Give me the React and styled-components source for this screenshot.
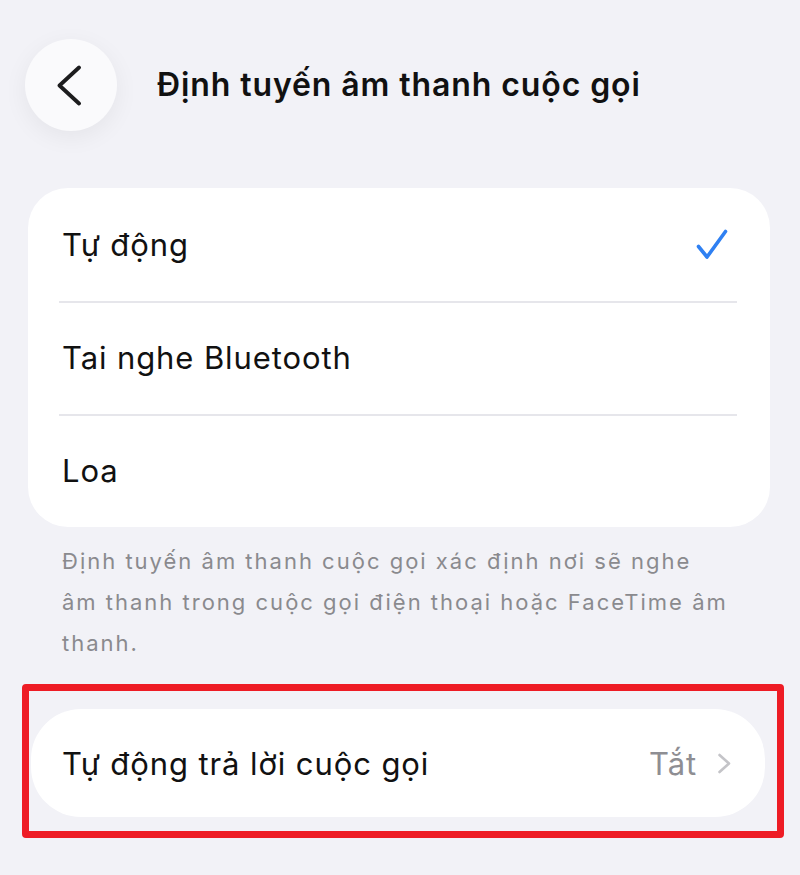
import React from "react";
import styled, { createGlobalStyle } from "styled-components";

const GlobalStyle = createGlobalStyle`
  html, body {
    margin: 0;
    padding: 0;
    background: #f2f2f7;
  }
  body {
    font-family: Inter, "Noto Sans", "Liberation Sans", sans-serif;
    color: #000;
    -webkit-font-smoothing: antialiased;
  }
`;

const Screen = styled.div`
  width: 800px;
  height: 875px;
  box-sizing: border-box;
  background: #f2f2f7;
  padding: 39px 30px 0 28px;
  display: flex;
  flex-direction: column;
  overflow: hidden;
`;

const Header = styled.header`
  display: flex;
  align-items: center;
  gap: 40px;
  margin-left: -3px;
`;

const BackButton = styled.button`
  width: 92px;
  height: 92px;
  border-radius: 50%;
  border: none;
  background: #fafafc;
  box-shadow: 0 6px 24px rgba(0, 0, 0, 0.06);
  display: flex;
  align-items: center;
  justify-content: center;
  padding: 0 4px 0 0;
  cursor: pointer;
`;

const Title = styled.h1`
  margin: 0 0 2px;
  font-size: 32px;
  font-weight: 600;
  letter-spacing: 0.9px;
  color: #111;
`;

const Card = styled.div`
  background: #fff;
  border-radius: ${(p) => p.$radius || 40}px;
  display: flex;
  flex-direction: column;
`;

const OptionsCard = styled(Card)`
  margin-top: 57px;
`;

const Row = styled.div`
  height: ${(p) => p.$height || 113}px;
  box-sizing: border-box;
  padding: 0 ${(p) => p.$padRight || 42}px 0 ${(p) => p.$padLeft || 34}px;
  display: flex;
  align-items: center;
  justify-content: space-between;
  position: relative;
  font-size: 31px;
  letter-spacing: 0.9px;
  color: #111;

  & + &::before {
    content: "";
    position: absolute;
    top: 0;
    left: 31px;
    right: 33px;
    height: 2px;
    background: #e6e6eb;
  }
`;

const Footnote = styled.p`
  margin: 14px 0 0;
  padding: 0 0 0 34px;
  font-size: 22px;
  line-height: 41px;
  color: #8a8a8e;
  letter-spacing: 2px;
  white-space: nowrap;
`;

const Highlight = styled.div`
  margin: 20px -14px 0 -6px;
  border: 7px solid #ee1c25;
  border-radius: 4px;
  padding: 18px 12px 14px 2px;
`;

const Value = styled.span`
  display: flex;
  align-items: center;
  gap: 20px;
  color: #8e8e93;
`;

const Check = () => (
  <svg width="32" height="31" viewBox="0 0 32 31" fill="none">
    <path
      d="M2.5 17.5 L11 28 L29.5 2.5"
      stroke="#2f80f2"
      strokeWidth="3.6"
      strokeLinecap="round"
      strokeLinejoin="round"
    />
  </svg>
);

const BackChevron = () => (
  <svg width="26" height="41" viewBox="0 0 26 41" fill="none">
    <path
      d="M23 2.5 L3.5 20.5 L23 38.5"
      stroke="#1c1c1e"
      strokeWidth="3.8"
      strokeLinecap="round"
      strokeLinejoin="round"
    />
  </svg>
);

const Disclosure = () => (
  <svg width="15" height="21" viewBox="0 0 15 21" fill="none">
    <path
      d="M2.5 2 L12 10.5 L2.5 19"
      stroke="#c4c4c8"
      strokeWidth="2.6"
      strokeLinecap="round"
      strokeLinejoin="round"
    />
  </svg>
);

const routes = [
  { label: "Tự động", selected: true },
  { label: "Tai nghe Bluetooth" },
  { label: "Loa" },
];

export default function App() {
  return (
    <>
      <GlobalStyle />
      <Screen>
        <Header>
          <BackButton aria-label="Quay lại">
            <BackChevron />
          </BackButton>
          <Title>Định tuyến âm thanh cuộc gọi</Title>
        </Header>

        <OptionsCard>
          {routes.map((r) => (
            <Row key={r.label}>
              <span>{r.label}</span>
              {r.selected && <Check />}
            </Row>
          ))}
        </OptionsCard>

        <Footnote>
          Định tuyến âm thanh cuộc gọi xác định nơi sẽ nghe
          <br />
          âm thanh trong cuộc gọi điện thoại hoặc FaceTime âm
          <br />
          thanh.
        </Footnote>

        <Highlight>
          <Card $radius={50}>
            <Row $height={108} $padLeft={31} $padRight={33}>
              <span>Tự động trả lời cuộc gọi</span>
              <Value>
                Tắt
                <Disclosure />
              </Value>
            </Row>
          </Card>
        </Highlight>
      </Screen>
    </>
  );
}
